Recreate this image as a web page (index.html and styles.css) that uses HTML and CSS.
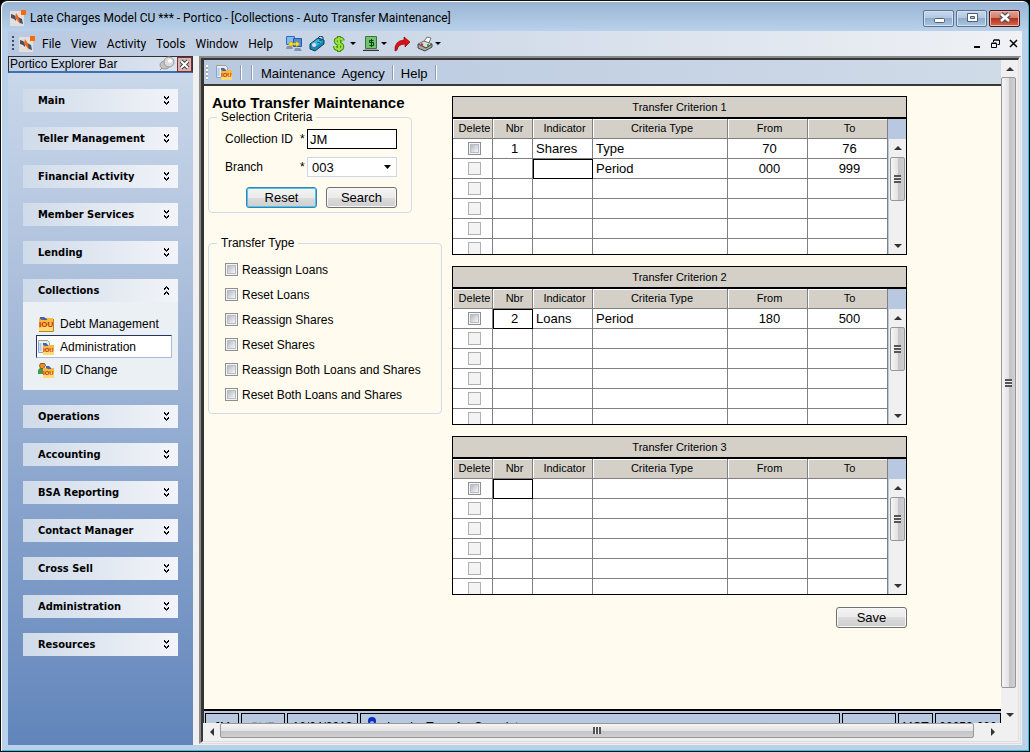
FILE: index.html
```html
<!DOCTYPE html>
<html lang="en">
<head>
    <meta charset="UTF-8">
    <meta name="viewport" content="width=device-width, initial-scale=1.0">
    <title>Portico - Auto Transfer Maintenance</title>
    <link rel="stylesheet" href="styles.css">
</head>
<body>
    <svg class="sprite" aria-hidden="true">
        <symbol id="logo" viewBox="0 0 16 16">
            <rect x="0" y="1" width="14" height="15" rx="1" fill="#e2dfdc"/>
            <path d="M1 4l3 1 2 2v4L4 9 1 8z" fill="#46505e"/>
            <path d="M8 7l4 2 1 5-3-1-2-3z" fill="#46505e"/>
            <path d="M6 3l2 3 1 3 1 5-3-4-2-2z" fill="#f2641b"/>
            <rect x="11" y="0" width="5" height="5" fill="#ff6a00"/>
        </symbol>
        <symbol id="down" viewBox="0 0 7 9">
            <path d="M1 0l2.500 2.500L6 0M1 1l2.500 2.500L6 1M1 5l2.500 2.500L6 5M1 6l2.500 2.500L6 6" fill="none" stroke="#000"/>
        </symbol>
        <symbol id="iou" viewBox="0 0 16 16">
            <path d="M1 2h14v13H1z" fill="#f7b93c"/>
            <path d="M1 12l14-4v7H1z" fill="#ffdc70"/>
            <path d="M1 15.500h14.500V3" fill="none" stroke="#b9822d"/>
            <path d="M2 1h4l3 2v1H4L2 3z" fill="#4a63a8"/>
            <text x="1" y="11" class="iou-text">IOU</text>
        </symbol>
        <symbol id="iou-page" viewBox="0 0 16 16">
            <path d="M.5 1.500h9l2 2v10H.5z" fill="#e3eefa" stroke="#86a6d0"/>
            <path d="M1 1.500h9" stroke="#c79a3a" stroke-dasharray="1 1"/>
            <path d="M2.500 4v8" stroke="#b2cbe8" stroke-width="2"/>
            <path d="M5 6h11v10H5z" fill="#f7b93c"/>
            <path d="M5 13l11-3v6H5z" fill="#ffdc70"/>
            <path d="M5 4h3l2 2v1H7L5 6z" fill="#4a63a8"/>
            <text x="5" y="13" class="iou-text small">IOU</text>
        </symbol>
        <symbol id="iou-user" viewBox="0 0 16 16">
            <path d="M0 12V8l2-2h4l2 3v3z" fill="#3f9a4e"/>
            <path d="M2.500 1.500h4l1 2-2 3h-3l-1-3z" fill="#e8912c" stroke="#8f5618"/>
            <path d="M5 6h11v10H5z" fill="#f7b93c"/>
            <path d="M5 13l11-3v6H5z" fill="#ffdc70"/>
            <path d="M8 4h3l2 2v1h-3L8 6z" fill="#4a63a8"/>
            <text x="5" y="13" class="iou-text small">IOU</text>
        </symbol>
    </svg>

    <div class="window">
        <header class="titlebar">
            <svg class="icon"><use href="#logo"/></svg>
            <h1>Late Charges Model CU *** - Portico - [Collections - Auto Transfer Maintenance]</h1>
            <div class="window-buttons">
                <button type="button" aria-label="Minimize">
                    <svg width="14" height="14" viewBox="0 0 14 14"><rect x="2.500" y="7.500" width="10" height="4" rx="1" fill="#fff" stroke="#535f73"/></svg>
                </button>
                <button type="button" aria-label="Maximize">
                    <svg width="14" height="14" viewBox="0 0 14 14"><path d="M2.500 2.500h10v8h-10zM5.500 5.500h4v2h-4z" fill="#fff" fill-rule="evenodd" stroke="#535f73"/></svg>
                </button>
                <button type="button" class="close" aria-label="Close">
                    <svg width="14" height="14" viewBox="0 0 14 14"><path d="M3 3l8 7M11 3l-8 7" stroke="#5a4a55" stroke-width="5"/><path d="M3 3l8 7M11 3l-8 7" stroke="#fff" stroke-width="2.500"/></svg>
                </button>
            </div>
        </header>

        <nav class="menubar">
            <span class="grip"></span>
            <svg class="icon"><use href="#logo"/></svg>
            <button type="button">File</button>
            <button type="button">View</button>
            <button type="button">Activity</button>
            <button type="button">Tools</button>
            <button type="button">Window</button>
            <button type="button">Help</button>
            <div class="quick-tools">
                <button type="button" aria-label="Transfer">
                    <svg class="icon" viewBox="0 0 16 16"><path d="M.5.500h8v8h-8z" fill="#7dbcf7" stroke="#3a67b5"/><path d="M7.500 2.500h8v8h-8z" fill="#4a8de6" stroke="#2f57a4"/><path d="M9 12h5l2 3H8zM1 10h5l1 3H0z" fill="#8492b8"/><path d="M2 8l4-3v2h4V5l4 3-4 3V9H6v2z" fill="#ffe11a" stroke="#a88a00" stroke-width=".5"/></svg>
                </button>
                <button type="button" aria-label="Calculator">
                    <svg class="icon" viewBox="0 0 16 16"><path d="M1 8l8-6 6 2v4l-9 7-5-2z" fill="#1787b4" stroke="#0d3f5c"/><path d="M2 8l7-5 5 2-8 6z" fill="#3bb8dc"/><circle cx="5" cy="9" r="2" fill="#f3d3ee"/><path d="M8 6l3 1M10 4l3 1" stroke="#0d5c80"/><path d="M9 2l2-2 3 1v2" fill="none" stroke="#0d3f5c"/></svg>
                </button>
                <button type="button" aria-label="Cash">
                    <svg class="icon" viewBox="0 0 16 16"><path d="M11 5Q10 2 7 3 3 3 4 6 5 8 8 8 11 9 10 12 8 14 6 13 3 13 3 10M7 0v16" fill="none" stroke="#3d8c17" stroke-width="4"/><path d="M11 5Q10 2 7 3 3 3 4 6 5 8 8 8 11 9 10 12 8 14 6 13 3 13 3 10M7 1v14" fill="none" stroke="#9be23a" stroke-width="2"/></svg>
                    <span class="caret"></span>
                </button>
                <button type="button" aria-label="Teller">
                    <svg class="icon" viewBox="0 0 16 16"><path d="M2.500.500h11v12h-11z" fill="#6cc46c" stroke="#4a6b4a"/><path d="M0 14.500h16" stroke="#333"/><path d="M1 13.500h14" stroke="#aaa"/><path d="M10.500 4.500h-4v2h4v3h-4M8.500 3v8" fill="none" stroke="#123f12"/></svg>
                    <span class="caret"></span>
                </button>
                <button type="button" aria-label="Go">
                    <svg class="icon" viewBox="0 0 16 16"><path d="M1 15Q0 5 10 4V1l6 5-5 5V8Q4 8 3 14z" fill="#e01010" stroke="#7d0808" stroke-width=".7"/></svg>
                </button>
                <button type="button" aria-label="Print">
                    <svg class="icon" viewBox="0 0 16 16"><path d="M6 7l4-6 4 1-3 7z" fill="#fff" stroke="#777"/><path d="M1 8l6-3 8 3-6 4z" fill="#dedede" stroke="#666"/><path d="M1 8v4l7 3 7-4V8l-6 4z" fill="#a8a8a8" stroke="#444"/><path d="M4 8l2 1" stroke="#d22" stroke-width="2"/><path d="M10 9h2" stroke="#2b2" stroke-width="2"/></svg>
                    <span class="caret"></span>
                </button>
            </div>
            <div class="child-buttons">
                <button type="button" aria-label="Minimize form"><svg width="9" height="9"><path d="M1 8h6" stroke="#000" stroke-width="2"/></svg></button>
                <button type="button" aria-label="Restore form"><svg width="9" height="9"><path d="M.5 4.500h5v4h-5zM.5 4h5M2.500 3V1h6v4.500h-2M3 1h5" fill="none" stroke="#000"/></svg></button>
                <button type="button" aria-label="Close form"><svg width="9" height="9"><path d="M1 1l7 7M8 1L1 8" stroke="#000" stroke-width="1.500"/></svg></button>
            </div>
        </nav>

        <div class="main">
            <aside class="explorer">
                <div class="explorer-title">
                    <h2>Portico Explorer Bar</h2>
                    <button type="button" aria-label="Pin">
                        <svg class="icon" viewBox="0 0 16 16"><path d="M1 14l5-5" stroke="#888"/><ellipse cx="6" cy="9" rx="5" ry="4" fill="#c2c2c2" stroke="#999"/><circle cx="10" cy="6" r="5" fill="#dcdcdc" stroke="#999"/><circle cx="11" cy="5" r="2" fill="#fff"/></svg>
                    </button>
                    <button type="button" class="explorer-close" aria-label="Close explorer">
                        <svg width="11" height="11"><path d="M2 2l7 7M9 2L2 9" stroke="#444" stroke-width="4"/><path d="M2 2l7 7M9 2L2 9" stroke="#fff" stroke-width="2"/></svg>
                    </button>
                </div>
                <div class="groups">
                    <button type="button" class="group">Main<svg><use href="#down"/></svg></button>
                    <button type="button" class="group">Teller Management<svg><use href="#down"/></svg></button>
                    <button type="button" class="group">Financial Activity<svg><use href="#down"/></svg></button>
                    <button type="button" class="group">Member Services<svg><use href="#down"/></svg></button>
                    <button type="button" class="group">Lending<svg><use href="#down"/></svg></button>
                    <div class="open-group">
                        <button type="button" class="group open" aria-expanded="true">Collections<svg><use href="#down"/></svg></button>
                        <div class="links">
                            <a href="#debt"><svg class="icon"><use href="#iou"/></svg>Debt Management</a>
                            <a href="#administration" class="current"><svg class="icon"><use href="#iou-page"/></svg>Administration</a>
                            <a href="#id-change"><svg class="icon"><use href="#iou-user"/></svg>ID Change</a>
                        </div>
                    </div>
                    <button type="button" class="group">Operations<svg><use href="#down"/></svg></button>
                    <button type="button" class="group">Accounting<svg><use href="#down"/></svg></button>
                    <button type="button" class="group">BSA Reporting<svg><use href="#down"/></svg></button>
                    <button type="button" class="group">Contact Manager<svg><use href="#down"/></svg></button>
                    <button type="button" class="group">Cross Sell<svg><use href="#down"/></svg></button>
                    <button type="button" class="group">Administration<svg><use href="#down"/></svg></button>
                    <button type="button" class="group">Resources<svg><use href="#down"/></svg></button>
                </div>
            </aside>

            <div class="workspace">
                <div class="form-area">
                    <div class="toolbar">
                        <span class="grip light"></span>
                        <svg class="icon"><use href="#iou-page"/></svg>
                        <span class="separator"></span>
                        <span class="separator"></span>
                        <button type="button">Maintenance</button>
                        <button type="button">Agency</button>
                        <span class="separator"></span>
                        <button type="button">Help</button>
                        <span class="separator"></span>
                    </div>

                    <main class="content">
                        <form class="options">
                            <h2>Auto Transfer Maintenance</h2>
                            <fieldset class="selection">
                                <legend>Selection Criteria</legend>
                                <div class="field">
                                    <label for="collection-id">Collection ID</label><span>*</span>
                                    <input type="text" id="collection-id" value="JM">
                                </div>
                                <div class="field">
                                    <label for="branch">Branch</label><span>*</span>
                                    <select id="branch"><option>003</option></select>
                                </div>
                                <div class="buttons">
                                    <button type="reset" class="btn default">Reset</button>
                                    <button type="button" class="btn">Search</button>
                                </div>
                            </fieldset>
                            <fieldset class="types">
                                <legend>Transfer Type</legend>
                                <label><input type="checkbox">Reassign Loans</label>
                                <label><input type="checkbox">Reset Loans</label>
                                <label><input type="checkbox">Reassign Shares</label>
                                <label><input type="checkbox">Reset Shares</label>
                                <label><input type="checkbox">Reassign Both Loans and Shares</label>
                                <label><input type="checkbox">Reset Both Loans and Shares</label>
                            </fieldset>
                        </form>

                        <div class="criteria" id="criteria">
                            <button type="button" class="btn save">Save</button>
                        </div>
                    </main>

                    <footer class="statusbar">
                        <span class="user">JM</span>
                        <span class="mode">OVR</span>
                        <span class="date">12/24/2013</span>
                        <span class="message"><svg width="10" height="14" viewBox="0 0 10 14"><path d="M2 13L1 8l2-5h4l2 5-1 5z" fill="#4a7dff"/><circle cx="5" cy="4" r="4" fill="#0a2fc0"/><circle cx="5" cy="6" r="2" fill="#8fb4ff"/></svg>Inquiry Transfer Complete</span>
                        <span class="blank"></span>
                        <span class="code">MCT</span>
                        <span class="number">00052-000</span>
                    </footer>
                </div>
                <div class="scrollbar vertical" aria-hidden="true"><i class="up"></i><b></b><i class="down"></i></div>
                <div class="scrollbar horizontal" aria-hidden="true"><i class="left"></i><b></b><i class="right"></i></div>
            </div>
        </div>
    </div>

    <script src="script.js"></script>
</body>
</html>
```

FILE: styles.css
```css
* {
    box-sizing: border-box;
}
body {
    margin: 0;
    font-family: "Liberation Sans", Arial, sans-serif;
    font-size: 12px;
    color: #000;
    background-color: #000;
}
h1, h2 {
    margin: 0;
    font-weight: normal;
}
button, input, select {
    font: inherit;
    color: inherit;
}
button {
    padding: 0;
    border: 0;
    background: none;
}
.sprite {
    display: none;
}
.icon {
    width: 16px;
    height: 16px;
    flex: none;
}
.iou-text {
    font-family: "Liberation Sans", Arial, sans-serif;
    font-size: 8px;
    font-weight: bold;
    fill: #c8321e;
}
.iou-text.small {
    font-size: 6px;
}
.window {
    height: 100vh;
    display: flex;
    flex-direction: column;
    padding: 0 7px 6px;
    background-color: #b9d1ea;
    border: 1px solid #111;
    border-right-color: #000;
    border-radius: 7px 7px 0 0;
    box-shadow: inset 1px 1px 0 #fff, inset -1px -1px 0 #22c8e4;
    background-clip: padding-box;
    background-image: linear-gradient(#98b4d3, #b9d1ea 30px);
}

/* title bar */
.titlebar {
    height: 30px;
    flex: none;
    display: flex;
    align-items: center;
    gap: 4px;
    padding: 4px 2px 0;
}
.titlebar h1 {
    flex: 1;
    font-family: Roboto, sans-serif;
    font-size: 12px;
}
.window-buttons {
    display: flex;
    gap: 2px;
}
.window-buttons button {
    width: 31px;
    height: 17px;
    display: flex;
    align-items: center;
    justify-content: center;
    border: 1px solid #5c7290;
    border-radius: 2px;
    background: linear-gradient(#c5d8ec, #b0c7e0 50%, #8faccb 50%, #a9c6e4);
    box-shadow: inset 0 0 0 1px #d3e1f0;
}
.window-buttons .close {
    border-color: #4d1414;
    background: linear-gradient(#e3a195, #d07a6a 50%, #b6321c 50%, #cf6a50);
    box-shadow: inset 0 0 0 1px #eab9ae;
}

/* menu bar */
.menubar {
    height: 25px;
    flex: none;
    display: flex;
    align-items: center;
    padding: 0 4px;
    font-family: Roboto, sans-serif;
    font-size: 12px;
    background: linear-gradient(to right, #b9c9e1, #d3ddea 50%, #eff1f5);
}
.menubar > button {
    padding: 0 5px;
}
.menubar > .icon {
    margin: 0 2px 0 5px;
}
.grip {
    width: 2px;
    height: 15px;
    background: repeating-linear-gradient(#3b4c74 0 2px, transparent 2px 4px);
}
.grip.light {
    background: repeating-linear-gradient(#fff 0 2px, #a2adbf 2px 4px);
}
.quick-tools {
    display: flex;
    gap: 7px;
    margin-left: 8px;
}
.quick-tools button {
    display: flex;
    align-items: center;
    gap: 2px;
}
.caret {
    border: 3px solid transparent;
    border-top-color: #000;
    border-bottom: 0;
}
.child-buttons {
    display: flex;
    gap: 9px;
    margin-left: auto;
}
.child-buttons svg {
    display: block;
}

/* explorer bar */
.main {
    flex: 1;
    min-height: 0;
    display: flex;
    background-color: #f0f0f0;
}
.explorer {
    width: 185px;
    flex: none;
    background: linear-gradient(#ccd9eb, #afc2dd 30%, #6185bb);
}
.explorer-title {
    height: 17px;
    display: flex;
    align-items: center;
    gap: 2px;
    border: 1px solid #333;
    border-bottom: 2px solid #3e6fae;
    background: linear-gradient(to right, #c0cfe6, #dfe6f0);
}
.explorer-title h2 {
    flex: 1;
    padding-left: 1px;
    font-size: 12px;
}
.explorer-title .icon {
    display: block;
}
.explorer-close {
    width: 15px;
    height: 15px;
    display: flex;
    align-items: center;
    justify-content: center;
    border: 1px solid #7a2f2f;
    background-color: #d9b3b3;
}
.groups {
    display: flex;
    flex-direction: column;
    gap: 15px;
    padding: 16px 15px;
}
.group {
    width: 100%;
    height: 23px;
    display: flex;
    align-items: center;
    justify-content: space-between;
    padding: 0 8px 0 15px;
    font-family: "DejaVu Sans Condensed", "DejaVu Sans", sans-serif;
    font-size: 11px;
    font-weight: bold;
    background: linear-gradient(to right, #d0dbe9, #f2f4f9);
}
.group svg {
    width: 7px;
    height: 9px;
}
.group.open svg {
    transform: rotate(180deg);
}
.links {
    display: flex;
    flex-direction: column;
    padding: 10px 6px 9px 13px;
    background-color: #eaf0f4;
}
.links a {
    height: 23px;
    display: flex;
    align-items: center;
    gap: 6px;
    padding-left: 2px;
    color: #000;
    text-decoration: none;
}
.links .current {
    padding-left: 1px;
    background-color: #fff;
    border: 1px solid #24345c;
    border-right-color: #a9bbd8;
    border-bottom-color: #a9bbd8;
}

/* form window */
.workspace {
    flex: 1;
    min-width: 0;
    display: grid;
    grid-template-columns: minmax(0, 1fr) 17px;
    grid-template-rows: minmax(0, 1fr) 18px;
    margin: 0 1px 1px 6px;
    border: 4px ridge #8a8a8a;
    border-right: 3px double #ddd;
    border-bottom: 3px double #ddd;
}
.form-area {
    display: flex;
    flex-direction: column;
    overflow: hidden;
    border-left: 1px solid #333;
    background-color: #fffbef;
}
.toolbar {
    height: 26px;
    flex: none;
    display: flex;
    align-items: center;
    padding-left: 2px;
    font-size: 13px;
    border-bottom: 2px solid #3b3838;
    background: linear-gradient(to right, #b8c8df, #d0dbe8);
}
.toolbar .icon {
    margin: 0 4px 0 8px;
}
.toolbar button {
    padding: 2px 3px 0;
}
.separator {
    width: 2px;
    height: 15px;
    margin: 0 4px;
    background: linear-gradient(to right, #8f9bb0 50%, #fff 50%);
}
.separator + .separator {
    margin: 0 5px;
}
.content {
    flex: 1;
    min-height: 0;
    display: flex;
    align-items: flex-start;
    gap: 10px;
    padding: 10px 4px;
}
.options {
    width: 234px;
    flex: none;
}
.options h2 {
    padding-left: 4px;
    font-size: 15px;
    font-weight: bold;
    line-height: 14px;
}
fieldset {
    margin: 0;
    padding: 0 16px;
    border: 1px solid #d0dbe8;
    border-radius: 4px;
}
legend {
    margin-left: -8px;
    padding: 0 4px;
    line-height: 14px;
}
.selection {
    width: 204px;
    padding: 1px 14px 4px 16px;
}
.field {
    display: flex;
    align-items: center;
    height: 28px;
}
.field label {
    width: 75px;
}
.field span {
    width: 7px;
}
.field input, .field select {
    width: 90px;
    height: 20px;
    padding: 0 2px;
    font-size: 13px;
    background-color: #fff;
}
.field input {
    border: 1px solid #000;
}
.field select {
    appearance: none;
    padding: 0 4px;
    border: 1px solid #cfd7e6;
    border-radius: 0;
    background: #fff url("data:image/svg+xml,%3Csvg xmlns='http://www.w3.org/2000/svg' width='7' height='4'%3E%3Cpath d='M0 0h7L3.500 4z'/%3E%3C/svg%3E") no-repeat right 5px center;
}
.buttons {
    display: flex;
    justify-content: flex-end;
    gap: 9px;
    padding-top: 6px;
}
.btn {
    width: 71px;
    height: 21px;
    font-size: 13px;
    border: 1px solid #707070;
    border-radius: 3px;
    background: linear-gradient(#f4f4f4, #ebebeb 50%, #dcdcdc 50%, #cecece);
    box-shadow: inset 0 0 0 1px #f8f8f8;
}
.btn.default {
    border-color: #3c7fb1;
    box-shadow: inset 0 0 0 1px #48c8f0;
}
.types {
    margin-top: 23px;
    padding: 7px 16px 6px;
}
.types label {
    height: 25px;
    display: flex;
    align-items: center;
    gap: 4px;
    white-space: nowrap;
}
input[type="checkbox"] {
    appearance: none;
    width: 13px;
    height: 13px;
    margin: 0;
    border: 1px solid #8e8f8f;
    background: linear-gradient(135deg, #b4bac4, #f6f6f6) content-box, #f4f4f4;
    padding: 2px;
    outline: 1px solid #b8bcc4;
    outline-offset: -3px;
}
input[type="checkbox"]:disabled {
    border-color: #b1b1b1;
    background: #f3f3f3;
    outline: 0;
}

/* criterion grids */
.criteria {
    width: 455px;
    flex: none;
    display: flex;
    flex-direction: column;
    gap: 11px;
}
.grid {
    border: 1px solid #000;
    background-color: #d4d0c8;
}
.grid h3 {
    height: 22px;
    margin: 0;
    border-bottom: 2px solid #000;
    font-size: 11px;
    font-weight: normal;
    line-height: 20px;
    text-align: center;
}
.grid-body {
    height: 135px;
    display: flex;
    overflow: hidden;
}
.grid table {
    flex: 1;
    table-layout: fixed;
    border-spacing: 0;
    background-color: #fff;
}
.grid th, .grid td {
    height: 20px;
    padding: 0 0 0 4px;
    border: solid #808080;
    border-width: 0 1px 1px 0;
    font-size: 13px;
    text-align: center;
    line-height: 19px;
}
.grid th {
    font-size: 11px;
    font-weight: normal;
    background-color: #d4d0c8;
    box-shadow: inset 1px 1px 0 #fff;
}
.grid .text {
    padding-left: 3px;
    text-align: left;
}
.grid .active {
    outline: 1px solid #000;
    outline-offset: -1px;
}
.grid td input {
    display: block;
    margin: 0 auto;
}
.col-delete, .col-nbr {
    width: 40px;
}
.col-indicator {
    width: 60px;
}
.col-from, .col-to {
    width: 80px;
}
.grid-scroll {
    width: 18px;
    flex: none;
    display: flex;
    padding-top: 20px;
    background-color: #b8c8e0;
}
.grid-scroll .scrollbar {
    flex: 1;
    margin-left: 1px;
}
.save {
    margin-top: 1px;
    align-self: flex-end;
}

/* scroll bars */
.scrollbar {
    display: flex;
    background-color: #f0f0f0;
}
.scrollbar.vertical {
    flex-direction: column;
}
.scrollbar i {
    width: 17px;
    height: 17px;
    flex: none;
    display: flex;
    align-items: center;
    justify-content: center;
}
.scrollbar i::before {
    content: "";
    border: 4px solid transparent;
}
.scrollbar .up::before {
    border-top: 0;
    border-bottom-color: #333;
}
.scrollbar .down::before {
    border-bottom: 0;
    border-top-color: #333;
}
.scrollbar .left::before {
    border-left: 0;
    border-right-color: #333;
}
.scrollbar .right::before {
    border-right: 0;
    border-left-color: #333;
}
.scrollbar b {
    flex: 1;
    display: flex;
    align-items: center;
    justify-content: center;
    border: 1px solid #979797;
    border-radius: 2px;
}
.scrollbar b::before {
    content: "";
    width: 7px;
    height: 8px;
    background: repeating-linear-gradient(#555 0 2px, #eee 2px 3px);
}
.vertical b {
    margin: 0 2px 18px 0;
    background: linear-gradient(to right, #f5f5f5, #e3e3e5 50%, #c3c3c8 55%, #d0d0d3);
}
.horizontal b {
    margin-right: 10px;
    height: 15px;
    background: linear-gradient(#f5f5f5, #e3e3e5 50%, #c3c3c8 55%, #d0d0d3);
}
.horizontal b::before {
    width: 8px;
    height: 7px;
    background: repeating-linear-gradient(to right, #555 0 2px, #eee 2px 3px);
}
.grid-scroll b {
    margin: 1px 1px 36px;
}

/* status bar */
.statusbar {
    height: 14px;
    flex: none;
    display: flex;
    gap: 2px;
    padding: 2px 0 0 1px;
    overflow: hidden;
    border-top: 2px solid #000;
    background-color: #b8c8de;
}
.statusbar span {
    height: 20px;
    padding-top: 6px;
    flex: none;
    border: 1px solid #000;
    text-align: center;
}
.statusbar .user {
    width: 34px;
}
.statusbar .mode {
    width: 44px;
    color: #999;
}
.statusbar .date {
    width: 71px;
}
.statusbar .message {
    flex: 1;
    display: flex;
    gap: 10px;
    padding: 3px 6px 0;
    line-height: 20px;
}
.statusbar .blank {
    width: 54px;
}
.statusbar .code {
    width: 35px;
}
.statusbar .number {
    width: 66px;
}
```

FILE: script.js
```js
// row: [nbr, indicator, type, from, to], active: [row, column]
const criteria = [
    {
        rows: [['1', 'Shares', 'Type', '70', '76'], ['', '', 'Period', '000', '999']],
        active: [1, 1]
    },
    { rows: [['2', 'Loans', 'Period', '180', '500']], active: [0, 0] },
    { rows: [], active: [0, 0] }
];
const columns = ['Delete', 'Nbr', 'Indicator', 'Criteria Type', 'From', 'To'];
const classes = ['col-delete', 'col-nbr', 'col-indicator', 'col-type', 'col-from', 'col-to'];
const visibleRows = 6;

function buildRow(grid, index, r) {
    const row = grid.rows[r] || ['', '', '', '', ''];
    const cells = row.map((value, c) => {
        const names = [];
        if (c === 1 || c === 2) names.push('text');
        if (grid.active[0] === r && grid.active[1] === c) names.push('active');
        return `<td class="${names.join(' ')}">${value}</td>`;
    }).join('');
    const label = `Delete row ${r + 1} of criterion ${index + 1}`;
    return `<tr><td><input type="checkbox" aria-label="${label}" ${r > 0 ? 'disabled' : ''}></td>${cells}</tr>`;
}

function buildGrid(grid, index) {
    let rows = '';
    for (let r = 0; r < visibleRows; r++) rows += buildRow(grid, index, r);
    return `
        <section class="grid">
            <h3>Transfer Criterion ${index + 1}</h3>
            <div class="grid-body">
                <table>
                    <thead><tr>${columns.map((name, c) => `<th class="${classes[c]}">${name}</th>`).join('')}</tr></thead>
                    <tbody>${rows}</tbody>
                </table>
                <div class="grid-scroll" aria-hidden="true">
                    <div class="scrollbar vertical"><i class="up"></i><b></b><i class="down"></i></div>
                </div>
            </div>
        </section>`;
}

document.getElementById('criteria').insertAdjacentHTML('afterbegin', criteria.map(buildGrid).join(''));
```
